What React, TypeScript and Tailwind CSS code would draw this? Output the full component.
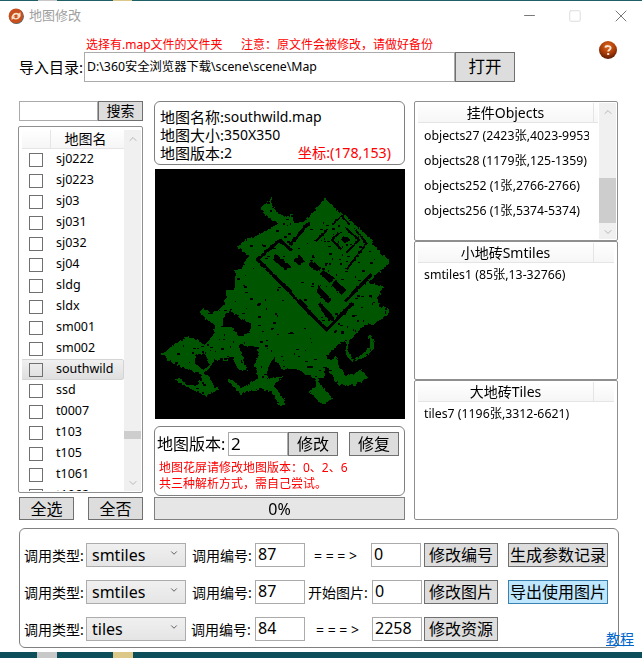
import { ChevronDown, ChevronUp, Minus, Square, X } from 'lucide-react'

const FONT = 'font-["Noto_Sans","Noto_Sans_CJK_SC",sans-serif]'

const MAPS = ['sj0222', 'sj0223', 'sj03', 'sj031', 'sj032', 'sj04', 'sldg', 'sldx', 'sm001', 'sm002', 'southwild', 'ssd', 't0007', 't103', 't105', 't1061', 't1062']

const OBJECTS = ['objects27 (2423张,4023-9953)', 'objects28 (1179张,125-1359)', 'objects252 (1张,2766-2766)', 'objects256 (1张,5374-5374)']

// map outline, traced piece by piece, each piece at 3x from its own origin
const LAND_WEST = '5,192 45,160 85,140 110,150 135,165 160,135 165,105 135,85 120,65 130,55 155,70 175,60 195,40 200,0 375,0 375,190 345,200 320,240 320,268 370,258 340,285 375,330 375,345 355,345 335,305 300,295 240,312 200,272 205,265 235,285 245,295 270,280 295,265 285,225 295,195 290,170 235,165 250,200 260,240 235,240 215,200 200,210 165,210 135,250 150,262 155,280 175,297 140,320 100,300 60,280 45,268 58,265 80,285 110,285 125,270 120,250 90,238 45,225'
const HOLES_WEST = ['190,85 210,60 235,80 270,100 270,130 240,140 215,110 190,110', '105,195 135,190 150,225 130,240 105,220']

const LAND_EAST = '0,0 300,0 315,55 330,50 345,65 325,85 300,100 270,105 250,125 225,150 215,175 235,212 265,190 285,170 283,135 300,155 295,178 270,200 240,215 225,210 212,190 212,150 180,170 150,205 170,210 185,200 190,225 215,260 260,240 280,260 240,285 190,285 165,250 150,225 150,265 130,265 135,285 175,322 145,345 100,305 125,285 120,262 90,255 80,240 45,235 25,240 0,210'

const LAND_TOWN = '75,55 110,25 110,50 130,70 165,85 170,70 178,100 205,95 220,85 270,25 315,70 330,75 400,140 420,170 465,215 400,280 445,288 435,315 400,330 430,350 400,390 0,390 0,240 20,235 40,195 5,170 40,145 70,135 130,100 100,85'

// the town walls are heavy, the streets inside are broken up
const WALLS = [
  '135,150 68,208 275,420 354,339',
  '135,150 170,182',
  '165,165 220,100',
  '330,335 410,252',
]

const STREETS = [
  '240,155 278,118',
  '292,104 320,78 345,104',
  '362,120 395,160 335,238',
  '330,112 372,150 335,188',
  '318,178 292,150 312,128',
]

const BLOCKS = [
  '120,190 170,230 150,238 115,210',
  '175,210 195,195 210,215 190,225',
  '230,210 260,235 245,245 220,225',
  '265,240 300,265 285,280 255,250',
  '300,270 335,300 320,315 290,285',
  '125,260 175,305 165,315 120,270',
  '195,325 220,350 210,355 185,330',
  '250,285 290,330 278,340 245,305',
  '255,335 300,385 280,392 250,345',
  '322,140 338,140 345,150 330,160 318,150',
]

// the small pits all over the land, in page pixels
function buildSpots() {
  const spots: { x: number; y: number; w: number; h: number }[] = []
  let seed = 4711
  const next = () => {
    seed = (seed * 16807) % 2147483647
    return seed / 2147483647
  }
  for (let i = 0; i < 520; i++) {
    const x = 162 + next() * 230
    const y = 198 + next() * 210
    const d = x - y
    // the plain just below the town wall is nearly solid
    if (d < -2 && d > -40 && next() < 0.8) continue
    spots.push({ x: Math.round(x), y: Math.round(y), w: 1 + Math.floor(next() * 3), h: 1 + Math.floor(next() * 2) })
  }
  return spots
}

const SPOTS = buildSpots()

function MapPreview() {
  return (
    <svg viewBox="155 169 250 250" className="block w-[250px] h-[250px] shrink-0 ml-px mt-[4px]" shapeRendering="crispEdges">
      <defs>
        <filter id="rough" x="155" y="169" width="250" height="250" filterUnits="userSpaceOnUse" primitiveUnits="userSpaceOnUse" colorInterpolationFilters="sRGB">
          <feTurbulence type="fractalNoise" baseFrequency="0.3" numOctaves="2" seed="3" />
          <feDisplacementMap in="SourceGraphic" scale="4" xChannelSelector="R" yChannelSelector="G" />
        </filter>
        <filter id="rough-fine" x="155" y="169" width="250" height="250" filterUnits="userSpaceOnUse" primitiveUnits="userSpaceOnUse" colorInterpolationFilters="sRGB">
          <feTurbulence type="fractalNoise" baseFrequency="0.4" numOctaves="2" seed="8" />
          <feDisplacementMap in="SourceGraphic" scale="2.5" xChannelSelector="R" yChannelSelector="G" />
        </filter>
      </defs>
      <rect x="155" y="169" width="250" height="250" fill="#000" />
      <g filter="url(#rough)">
        <g transform="translate(235 190) scale(0.3333)" fill="#005500">
          <polygon points={LAND_TOWN} />
        </g>
        <g transform="translate(160 290) scale(0.3333)">
          <polygon points={LAND_WEST} fill="#005500" />
          {HOLES_WEST.map(p => <polygon key={p} points={p} fill="#000" />)}
        </g>
        <g transform="translate(275 290) scale(0.3333)" fill="#005500">
          <polygon points={LAND_EAST} />
        </g>
      </g>
      <g fill="#000">
        {SPOTS.map((s, i) => <rect key={i} x={s.x} y={s.y} width={s.w} height={s.h} />)}
      </g>
      <g filter="url(#rough-fine)">
        <g transform="translate(235 190) scale(0.3333)">
          {WALLS.map(p => <polyline key={p} points={p} fill="none" stroke="#000" strokeWidth="10" />)}
          {STREETS.map(p => <polyline key={p} points={p} fill="none" stroke="#000" strokeWidth="6" />)}
          {BLOCKS.map(p => <polygon key={p} points={p} fill="#000" />)}
        </g>
      </g>
    </svg>
  )
}

function AppIcon() {
  return (
    <svg viewBox="0 0 16 16" className="w-4 h-4 shrink-0">
      <circle cx="8.4" cy="8.4" r="7.5" fill="#2f6f8a" />
      <circle cx="8" cy="8" r="7.4" fill="#c9501c" />
      <path d="M3.5 9.5 C4 5 8 3.5 11 5.5 L12.5 4 L12.5 8.5 L8.5 8.5 L10 7 C8 5.8 6 6.5 5.5 9 Z" fill="#f6e2c8" />
      <path d="M12.5 7.5 C12 11 8 12.5 5.2 10.8 L3.6 12 L3.6 8.5 L7.5 8.5 L6.2 9.8 C8 10.6 10 10 10.6 7.8 Z" fill="#f6e2c8" />
    </svg>
  )
}

function HelpIcon() {
  return (
    <svg viewBox="0 0 18 18" className="w-[18px] h-[18px]">
      <defs>
        <radialGradient id="help" cx="50%" cy="30%" r="70%">
          <stop offset="0%" stopColor="#e0681a" />
          <stop offset="60%" stopColor="#a83a08" />
          <stop offset="100%" stopColor="#5a1a02" />
        </radialGradient>
      </defs>
      <circle cx="9" cy="9" r="9" fill="url(#help)" />
      <path d="M6.4 6.6 C6.6 4.6 11.6 4.4 11.6 7 C11.6 8.6 9.2 8.8 9.2 10.6" fill="none" stroke="#f5e6d8" strokeWidth="1.9" />
      <rect x="8.2" y="12" width="2" height="2" fill="#f5e6d8" />
    </svg>
  )
}

function Scrollbar({ thumbTop, thumbHeight }: { thumbTop: string; thumbHeight: string }) {
  return (
    <div className="w-[17px] shrink-0 bg-[#f0f0f0] flex flex-col">
      <div className="h-[17px] shrink-0 flex items-center justify-center">
        <ChevronUp size={12} strokeWidth={1.5} className="text-[#a3a3a3]" />
      </div>
      <div className={`${thumbTop} ${thumbHeight} bg-[#cdcdcd] shrink-0`} />
      <div className="flex-1" />
      <div className="h-[17px] shrink-0 flex items-center justify-center">
        <ChevronDown size={12} strokeWidth={1.5} className="text-[#a3a3a3]" />
      </div>
    </div>
  )
}

function Btn({ children, className = '' }: { children: React.ReactNode; className?: string }) {
  return (
    <button className={`border border-[#707070] bg-[#dddddd] text-black flex items-center justify-center shrink-0 leading-none ${className}`}>
      {children}
    </button>
  )
}

function Field({ value, className = '' }: { value: string; className?: string }) {
  return (
    <div className={`border border-[#ababab] bg-white text-black flex items-center pl-[2px] pb-[2px] shrink-0 leading-none text-[16px] ${className}`}>
      {value}
    </div>
  )
}

function ListHeader({ title, full }: { title: string; full?: boolean }) {
  return (
    <div className={`h-[20px] shrink-0 flex bg-gradient-to-b from-white to-[#f6f6f6] border-b border-[#e5e5e5] text-[14px] leading-none ${full ? 'w-[196px]' : 'w-[180px]'}`}>
      <div className="w-[176px] shrink-0 flex items-center justify-center border-r border-[#e5e5e5]">{title}</div>
    </div>
  )
}

function TypeSelect({ value }: { value: string }) {
  return (
    <div className="w-[100px] self-stretch shrink-0 border border-[#acacac] bg-gradient-to-b from-[#f0f0f0] to-[#e5e5e5] flex items-center justify-between pl-[5px] pr-[6px] text-[16px] leading-none">
      <span>{value}</span>
      <ChevronDown size={10} strokeWidth={2} className="text-[#444] -mt-1" />
    </div>
  )
}

export default function App() {
  return (
    <div className={`relative w-[642px] h-[658px] bg-white overflow-hidden flex flex-col text-black ${FONT}`}>
      {/* desktop behind the window */}
      <div className="h-px shrink-0 bg-[#1f5f68] flex">
        <div className="w-[19px] ml-[38px] bg-[#c8c8c8]" />
        <div className="w-[19px] ml-[56px] bg-[#dcc98a]" />
      </div>

      {/* title bar */}
      <div className="h-[29px] shrink-0 flex items-center pl-[8px]">
        <AppIcon />
        <span className="ml-[5px] text-[13px] text-[#a0a0a0]">地图修改</span>
        <div className="ml-auto -mr-[2px] flex items-center">
          <div className="w-[46px] flex justify-center"><Minus size={17} strokeWidth={1.4} className="text-[#777]" /></div>
          <div className="w-[46px] flex justify-center"><Square size={14} strokeWidth={1.7} className="text-[#ddd]" /></div>
          <div className="w-[46px] flex justify-center"><X size={20} strokeWidth={1.2} className="text-[#777]" /></div>
        </div>
      </div>

      {/* import folder */}
      <div className="flex shrink-0">
        <div className="pl-[19px]">
          <div className="h-[22px] pl-[67px] pt-[7px] text-[12px] leading-[15px] text-[#ff0000] whitespace-nowrap flex">
            <span className="w-[155px]">选择有.map文件的文件夹</span>
            <span>{'注意\uFF1A原文件会被修改\uFF0C请做好备份'}</span>
          </div>
          <div className="flex items-center h-[30px]">
            <span className="w-[65px] text-[15px] whitespace-nowrap">导入目录:</span>
            <div className="w-[371px] h-full border border-[#ababab] flex items-center pl-[2px] text-[12.3px] whitespace-nowrap">
              D:\360安全浏览器下载\scene\scene\Map
            </div>
            <Btn className="w-[60px] h-full text-[16.5px]">打开</Btn>
          </div>
        </div>
        <div className="ml-[84px] mt-[11px]">
          <HelpIcon />
        </div>
      </div>

      {/* main columns */}
      <div className="flex mt-[19px] pl-[19px] h-[419px] shrink-0">
        {/* map list */}
        <div className="w-[124px] shrink-0 flex flex-col">
          <div className="flex h-[20px] shrink-0">
            <div className="w-[79px] border border-[#ababab]" />
            <Btn className="w-[45px] h-full text-[14px]">搜索</Btn>
          </div>
          <div className="mt-[5px] -ml-px w-[125px] h-[367px] shrink-0 border border-[#8f8f8f] rounded-[2px] flex pt-[3px] pb-px pl-[3px] pr-px overflow-hidden">
            <div className="flex-1 min-w-0 overflow-hidden">
              <div className="h-[19px] flex border-b border-[#e5e5e5] bg-gradient-to-b from-white to-[#f6f6f6] text-[14px] leading-none">
                <div className="w-[29px] border-r border-[#e5e5e5]" />
                <div className="flex-1 flex items-center justify-center pr-[4px]">地图名</div>
              </div>
              <div>
                {MAPS.map(name => (
                  <div
                    key={name}
                    className={`h-[21px] flex items-center pl-[7px] text-[12.5px] rounded-[2px] ${name === 'southwild' ? 'bg-gradient-to-b from-[#f0f0f0] to-[#dfdfdf] border border-[#d4d4d4] -ml-px pl-[7px]' : ''}`}
                  >
                    <div className="w-[14px] h-[14px] border border-[#707070] shrink-0" />
                    <span className="ml-[13px] leading-none">{name}</span>
                  </div>
                ))}
              </div>
            </div>
            <Scrollbar thumbTop="mt-[284px]" thumbHeight="h-[8px]" />
          </div>
          <div className="mt-[4px] flex justify-between">
            <Btn className="w-[55px] h-[23px] text-[16px]">全选</Btn>
            <Btn className="w-[55px] h-[23px] text-[16px]">全否</Btn>
          </div>
        </div>

        {/* map info */}
        <div className="w-[251px] ml-[11px] shrink-0 flex flex-col">
          <div className="h-[64px] shrink-0 border border-[#808080] rounded-[6px] pl-[5px] pt-[6px] text-[14px] leading-none">
            <div className="h-[18px] whitespace-nowrap flex items-center"><span className="text-[15px] w-[64px]">地图名称:</span>southwild.map</div>
            <div className="h-[18px] whitespace-nowrap flex items-center"><span className="text-[15px] w-[64px]">地图大小:</span>350X350</div>
            <div className="h-[18px] flex items-center pr-[13px] whitespace-nowrap">
              <span className="text-[15px] w-[64px]">地图版本:</span>
              <span>2</span>
              <span className="ml-auto text-[#ff0000] text-[14.2px]">坐标:(178,153)</span>
            </div>
          </div>
          <MapPreview />
          <div className="mt-[7px] h-[70px] shrink-0 border border-[#808080] rounded-[6px] pl-[2px] pt-[5px]">
            <div className="flex items-center h-[24px]">
              <span className="w-[71px] text-[16px] whitespace-nowrap">地图版本:</span>
              <Field value="2" className="w-[60px] h-full !text-[17px] !items-start pt-[2px]" />
              <Btn className="w-[50px] h-[24px] text-[16px]">修改</Btn>
              <Btn className="w-[50px] h-[24px] ml-[11px] text-[16px]">修复</Btn>
            </div>
            <div className="mt-[4px] pl-[2px] text-[12px] leading-[16px] text-[#ff0000] whitespace-nowrap">
              <div>{'地图花屏请修改地图版本\uFF1A0、2、6'}</div>
              <div>{'共三种解析方式\uFF0C需自己尝试。'}</div>
            </div>
          </div>
          <div className="mt-px h-[23px] shrink-0 border border-[#808080] bg-[#e6e6e6] flex items-center justify-center text-[16px] leading-none">
            0%
          </div>
        </div>

        {/* resource lists */}
        <div className="w-[204px] ml-[9px] shrink-0 flex flex-col">
          <div className="h-[140px] shrink-0 border border-[#8f8f8f] rounded-[2px] flex pl-[3px] pt-px pb-px pr-px overflow-hidden">
            <div className="flex-1 min-w-0">
              <ListHeader title="挂件Objects" />
              <div className="pt-[1px] w-[171px] overflow-hidden">
                {OBJECTS.map(row => (
                  <div key={row} className="h-[25px] flex items-center pl-[6px] text-[12.3px] leading-none whitespace-nowrap">{row}</div>
                ))}
              </div>
            </div>
            <Scrollbar thumbTop="mt-[58px]" thumbHeight="h-[45px]" />
          </div>
          <div className="h-[139px] shrink-0 border border-[#8f8f8f] rounded-[2px] pl-[3px] pt-px overflow-hidden">
            <ListHeader title="小地砖Smtiles" full />
            <div className="h-[25px] flex items-center pl-[6px] text-[12.3px] leading-none whitespace-nowrap">smtiles1 (85张,13-32766)</div>
          </div>
          <div className="h-[140px] shrink-0 border border-[#8f8f8f] rounded-[2px] pl-[3px] pt-px overflow-hidden">
            <ListHeader title="大地砖Tiles" full />
            <div className="h-[25px] flex items-center pl-[6px] text-[12.3px] leading-none whitespace-nowrap">tiles7 (1196张,3312-6621)</div>
          </div>
        </div>
      </div>

      {/* bottom tools */}
      <div className="ml-[19px] mt-[8px] w-[600px] h-[120px] shrink-0 border border-[#808080] rounded-[6px] pl-[4px] pt-[14px] flex flex-col gap-[13px] text-[14px]">
        <div className="flex items-center h-[24px]">
          <span className="w-[62px] whitespace-nowrap">调用类型:</span>
          <TypeSelect value="smtiles" />
          <span className="w-[63px] ml-[6px] whitespace-nowrap">调用编号:</span>
          <Field value="87" className="w-[50px] h-full" />
          <span className="w-[66px] pl-[9px] whitespace-nowrap">= = = &gt;</span>
          <Field value="0" className="w-[50px] h-full" />
          <Btn className="w-[74px] h-full ml-[3px] text-[16px]">修改编号</Btn>
          <Btn className="w-[100px] h-full ml-[10px] text-[16px]">生成参数记录</Btn>
        </div>
        <div className="flex items-center h-[24px]">
          <span className="w-[62px] whitespace-nowrap">调用类型:</span>
          <TypeSelect value="smtiles" />
          <span className="w-[63px] ml-[6px] whitespace-nowrap">调用编号:</span>
          <Field value="87" className="w-[50px] h-full" />
          <span className="w-[67px] pl-[3px] whitespace-nowrap">开始图片:</span>
          <Field value="0" className="w-[50px] h-full" />
          <Btn className="w-[74px] h-full ml-[2px] text-[16px]">修改图片</Btn>
          <button className="w-[100px] h-full ml-[10px] text-[16px] leading-none border border-[#3c7fb1] bg-[#bee6fd] shrink-0">导出使用图片</button>
        </div>
        <div className="flex items-center h-[24px]">
          <span className="w-[62px] whitespace-nowrap">调用类型:</span>
          <TypeSelect value="tiles" />
          <span className="w-[63px] ml-[5px] whitespace-nowrap">调用编号:</span>
          <Field value="84" className="w-[50px] h-full ml-px" />
          <span className="w-[67px] pl-[11px] whitespace-nowrap">= = = &gt;</span>
          <Field value="2258" className="w-[50px] h-full" />
          <Btn className="w-[74px] h-full ml-[2px] text-[16px]">修改资源</Btn>
        </div>
      </div>

      <a className="absolute left-[606px] top-[630px] text-[14px] leading-[18px] text-[#0066cc] underline">教程</a>

      {/* desktop below the window */}
      <div className="mt-auto h-[6px] shrink-0 bg-[#0c4f5a] flex">
        <div className="w-[20px] ml-[37px] bg-[#c8c8c8]" />
        <div className="w-[20px] ml-[56px] bg-[#dcc98a]" />
      </div>
    </div>
  )
}
